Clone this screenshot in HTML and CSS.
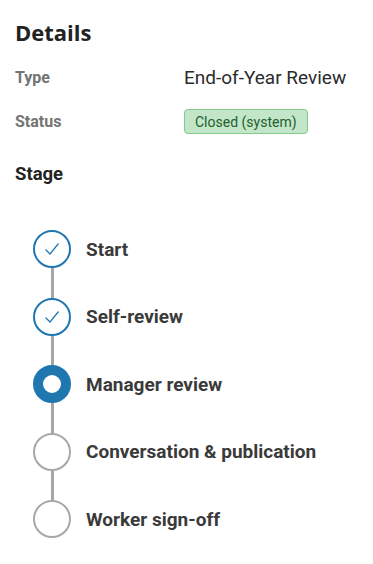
FILE: index.html
```html
<!DOCTYPE html>
<html lang="en">
<head>
    <meta charset="UTF-8">
    <meta name="viewport" content="width=device-width, initial-scale=1.0">
    <title>Details</title>
    <link rel="stylesheet" href="styles.css">
</head>
<body>
    <div class="panel">
        <h2 class="panel-title">Details</h2>
        <div class="detail-row">
            <div class="detail-label">Type</div>
            <div class="detail-value">End-of-Year Review</div>
        </div>
        <div class="detail-row">
            <div class="detail-label">Status</div>
            <div class="detail-value"><span class="badge">Closed (system)</span></div>
        </div>
        <h3 class="section-title">Stage</h3>

        <ul class="stepper">
            <li class="step done">
                <span class="dot">
                    <svg width="16" height="16" viewBox="0 0 16 16"><path d="M1.5 8.5 L6 13 L14.5 2.5" fill="none" stroke="#1f77b0" stroke-width="1.2"/></svg>
                </span>
                <span class="step-name">Start</span>
            </li>
            <li class="step done">
                <span class="dot">
                    <svg width="16" height="16" viewBox="0 0 16 16"><path d="M1.5 8.5 L6 13 L14.5 2.5" fill="none" stroke="#1f77b0" stroke-width="1.2"/></svg>
                </span>
                <span class="step-name">Self-review</span>
            </li>
            <li class="step current">
                <span class="dot"></span>
                <span class="step-name">Manager review</span>
            </li>
            <li class="step">
                <span class="dot"></span>
                <span class="step-name">Conversation &amp; publication</span>
            </li>
            <li class="step">
                <span class="dot"></span>
                <span class="step-name">Worker sign-off</span>
            </li>
        </ul>
    </div>
</body>
</html>
```

FILE: styles.css
```css
body {
    margin: 0;
    background: #fff;
    font-family: Roboto, "Liberation Sans", sans-serif;
    color: #333;
}

.panel {
    padding: 18px 15px 20px 15px;
}

.panel-title {
    margin: 0 0 9px 0;
    font-family: "Open Sans", "DejaVu Sans", sans-serif;
    font-size: 22px;
    font-weight: 700;
    color: #222;
    line-height: 28px;
}

.detail-row {
    display: flex;
    align-items: center;
    height: 44px;
}

.detail-label {
    width: 169px;
    font-size: 16px;
    font-weight: 700;
    color: #737373;
}

.detail-value {
    font-size: 19px;
    color: #2b2b2b;
}

.badge {
    display: inline-block;
    font-size: 14px;
    line-height: 16px;
    padding: 4px 10px 3px 10px;
    background: #c3e6c9;
    border: 1px solid #80cc8c;
    border-radius: 4px;
    color: #22602c;
}

.section-title {
    margin: 19px 0 0 0;
    font-size: 18.5px;
    font-weight: 700;
    color: #222;
    line-height: 24px;
}

.stepper {
    list-style: none;
    margin: 0;
    padding: 44px 0 0 18px;
}

.step {
    display: flex;
    align-items: center;
    gap: 15px;
    position: relative;
    height: 38px;
    margin-bottom: 29.5px;
}

.step:not(:last-child)::after {
    content: "";
    position: absolute;
    left: 17.5px;
    top: 38px;
    width: 3px;
    height: 29.5px;
    background: #a6a6a6;
}

.dot {
    box-sizing: border-box;
    width: 38px;
    height: 38px;
    border-radius: 50%;
    border: 2px solid #a8a8a8;
    background: #fff;
    display: flex;
    align-items: center;
    justify-content: center;
    flex-shrink: 0;
}

.step.done .dot {
    border-color: #1f77b0;
}

.step.current .dot {
    border: 10px solid #1f77b0;
}

.step-name {
    font-size: 19px;
    font-weight: 700;
    color: #3a3a3a;
}
```
